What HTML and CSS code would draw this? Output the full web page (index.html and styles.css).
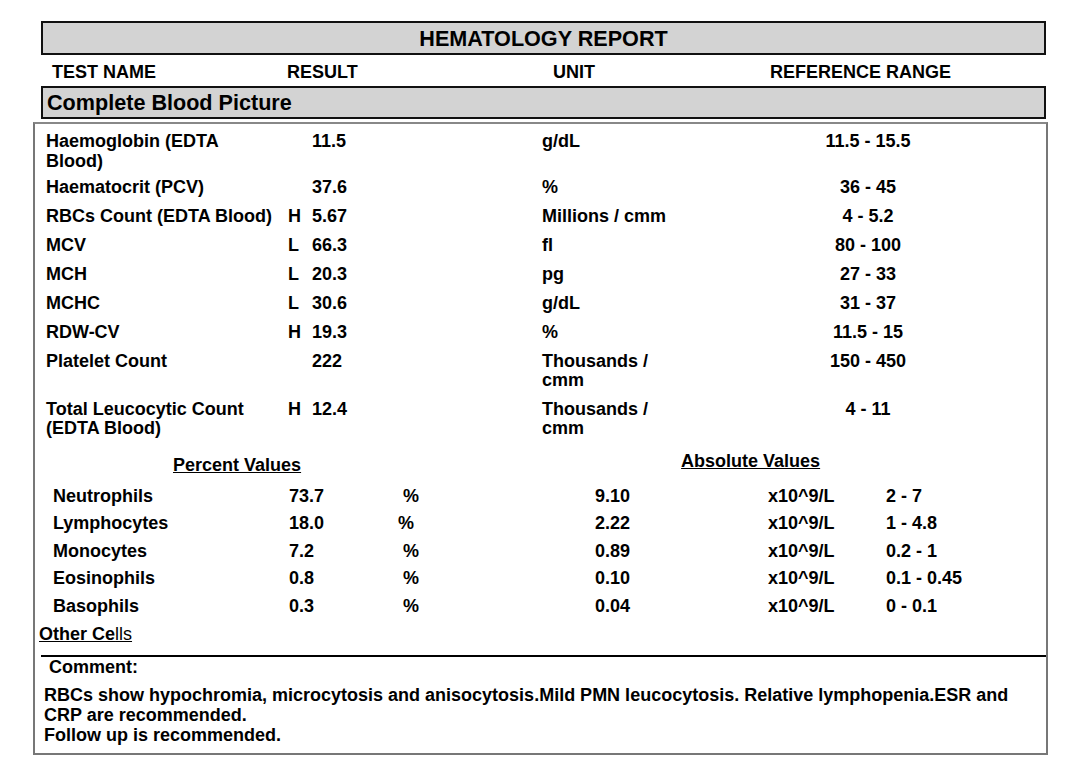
FILE: index.html
```html
<!DOCTYPE html>
<html>
<head>
<meta charset="utf-8">
<link rel="stylesheet" href="styles.css">
</head>
<body>
<div class="report">
  <div class="title-box">HEMATOLOGY REPORT</div>
  <div class="col-header">
    <span>TEST NAME</span>
    <span>RESULT</span>
    <span>UNIT</span>
    <span>REFERENCE RANGE</span>
  </div>
  <div class="section-box">Complete Blood Picture</div>
  <div class="main-box">
    <div class="tests">
      <div class="row row-first"><span class="name">Haemoglobin (EDTA Blood)</span><span class="flag"></span><span class="result">11.5</span><span class="unit">g/dL</span><span class="range">11.5 - 15.5</span></div>
      <div class="row"><span class="name">Haematocrit (PCV)</span><span class="flag"></span><span class="result">37.6</span><span class="unit">%</span><span class="range">36 - 45</span></div>
      <div class="row"><span class="name">RBCs Count (EDTA Blood)</span><span class="flag">H</span><span class="result">5.67</span><span class="unit">Millions / cmm</span><span class="range">4 - 5.2</span></div>
      <div class="row"><span class="name">MCV</span><span class="flag">L</span><span class="result">66.3</span><span class="unit">fl</span><span class="range">80 - 100</span></div>
      <div class="row"><span class="name">MCH</span><span class="flag">L</span><span class="result">20.3</span><span class="unit">pg</span><span class="range">27 - 33</span></div>
      <div class="row"><span class="name">MCHC</span><span class="flag">L</span><span class="result">30.6</span><span class="unit">g/dL</span><span class="range">31 - 37</span></div>
      <div class="row"><span class="name">RDW-CV</span><span class="flag">H</span><span class="result">19.3</span><span class="unit">%</span><span class="range">11.5 - 15</span></div>
      <div class="row"><span class="name">Platelet Count</span><span class="flag"></span><span class="result">222</span><span class="unit">Thousands / cmm</span><span class="range">150 - 450</span></div>
      <div class="row"><span class="name">Total Leucocytic Count (EDTA Blood)</span><span class="flag">H</span><span class="result">12.4</span><span class="unit">Thousands / cmm</span><span class="range">4 - 11</span></div>
    </div>
    <div class="diff-head">
      <span class="pct-title">Percent Values</span>
      <span class="abs-title">Absolute Values</span>
    </div>
    <div class="diff">
      <div class="drow"><span>Neutrophils</span><span>73.7</span><span class="pc">%</span><span>9.10</span><span>x10^9/L</span><span>2 - 7</span></div>
      <div class="drow"><span>Lymphocytes</span><span>18.0</span><span class="pc pc-left">%</span><span>2.22</span><span>x10^9/L</span><span>1 - 4.8</span></div>
      <div class="drow"><span>Monocytes</span><span>7.2</span><span class="pc">%</span><span>0.89</span><span>x10^9/L</span><span>0.2 - 1</span></div>
      <div class="drow"><span>Eosinophils</span><span>0.8</span><span class="pc">%</span><span>0.10</span><span>x10^9/L</span><span>0.1 - 0.45</span></div>
      <div class="drow"><span>Basophils</span><span>0.3</span><span class="pc">%</span><span>0.04</span><span>x10^9/L</span><span>0 - 0.1</span></div>
    </div>
    <div class="other"><span class="other-text">Other Ce<span class="thin">lls</span></span></div>
    <div class="comment">
      <div class="comment-label">Comment:</div>
      <p class="comment-text">RBCs show hypochromia, microcytosis and anisocytosis.Mild PMN leucocytosis. Relative lymphopenia.ESR and CRP are recommended.<br>Follow up is recommended.</p>
    </div>
  </div>
</div>
</body>
</html>
```

FILE: styles.css
```css
* { box-sizing: border-box; }
html, body { margin: 0; padding: 0; background: #fff; }
body {
  font-family: "Liberation Sans", Arial, sans-serif;
  font-weight: bold;
  font-size: 18px;
  line-height: 20px;
  color: #000;
  width: 1080px;
  height: 761px;
  overflow: hidden;
}
.report { padding-top: 21px; }
.title-box {
  margin: 0 34px 0 41px;
  height: 34px;
  border: 2px solid #111;
  background: #d3d3d3;
  text-align: center;
  font-size: 21.6px;
  line-height: 32px;
}
.col-header {
  display: grid;
  grid-template-columns: 235px 266px 217px auto;
  padding: 7px 0 4px 52px;
  height: 31px;
}
.section-box {
  margin: 0 34px 0 41px;
  height: 33px;
  border: 2px solid #111;
  background: #d3d3d3;
  font-size: 21.6px;
  line-height: 29px;
  padding-left: 4px;
}
.main-box {
  margin: 3px 32px 0 33px;
  height: 633px;
  border: 2px solid #777;
  border-top-color: #888;
}
.tests { padding-top: 1px; }
.row {
  display: grid;
  grid-template-columns: 242px 24px 230px 218px 216px;
  padding: 5px 0 5px 11px;
  line-height: 19px;
}
.row-first {
  padding: 6px 0 2px 11px;
  line-height: 20px;
}
.name { max-width: 231px; }
.unit { max-width: 130px; }
.range { text-align: center; }
.diff-head {
  display: flex;
  align-items: flex-start;
  padding-top: 8px;
  height: 39px;
}
.pct-title {
  text-decoration: underline;
  margin-left: 138px;
  padding-top: 4px;
}
.abs-title {
  text-decoration: underline;
  margin-left: 380px;
}
.drow {
  display: grid;
  grid-template-columns: 236px 114px 192px 173px 118px auto;
  padding-left: 18px;
  height: 27.5px;
  align-items: center;
}
.pc-left { position: relative; left: -5px; }
.other {
  padding: 4.5px 0 0 4px;
  height: 35px;
}
.other-text { text-decoration: underline; }
.thin { font-weight: normal; }
.comment {
  margin-left: 6px;
  border-top: 2px solid #000;
}
.comment-label {
  padding-left: 8px;
}
.comment-text {
  margin: 8px 0 0 3px;
  padding-right: 20px;
}
```
